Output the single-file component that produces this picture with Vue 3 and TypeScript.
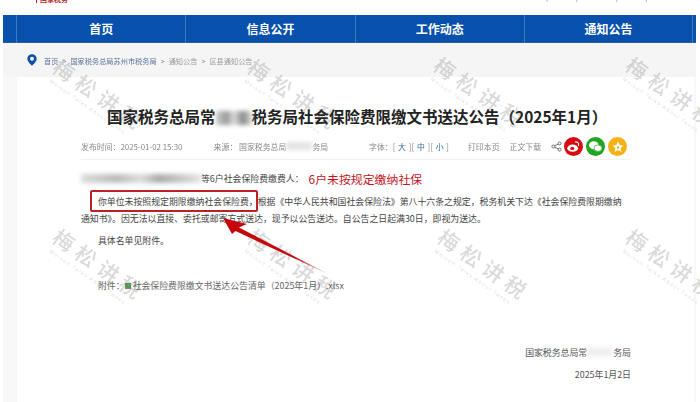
<template>
  <div class="page">
    <header class="topbar">
      <span class="logo">国家税务</span>
      <span class="top-links">无障碍浏览 | 繁体 | 关怀版 | 登录 | 注册</span>
    </header>

    <nav class="nav">
      <a v-for="item in navItems" :key="item" class="nav-item">{{ item }}</a>
    </nav>

    <div class="content">
      <div class="crumbs">
        <svg class="pin" viewBox="0 0 12 14" width="10" height="12">
          <path fill="#0a50a8" fill-rule="evenodd" d="M6 0a5.6 5.6 0 0 1 5.6 5.6C11.600 9.400 6 14 6 14S.4 9.400.4 5.600A5.600 5.600 0 0 1 6 0zm0 3.200a2.400 2.400 0 1 0 0 4.800 2.400 2.400 0 0 0 0-4.800z" />
        </svg>
        <span class="crumb-blue">首页</span>
        <span class="crumb-sep">&gt;</span>
        <span class="crumb-blue">国家税务总局苏州市税务局</span>
        <span class="crumb-sep">&gt;</span>
        <span>通知公告</span>
        <span class="crumb-sep">&gt;</span>
        <span>区县通知公告</span>
      </div>

      <main class="article">
        <h1 class="title">国家税务总局常<span class="blur-block"></span>税务局社会保险费限缴文书送达公告（2025年1月）</h1>

        <div class="meta">
          <span class="meta-time">发布时间：2025-01-02 15:30</span>
          <span class="meta-source">来源：&nbsp;国家税务总局<span class="blur-small"></span>务局</span>
          <span class="meta-font">字体：[ <b>大</b> ][ <b>中</b> ][ <b>小</b> ]</span>
          <span class="meta-action">打印本页</span>
          <span class="meta-action">正文下载</span>
          <svg class="share" viewBox="0 0 14 14" width="11" height="11">
            <g fill="none" stroke="#666" stroke-width="1.2">
              <circle cx="11" cy="3" r="1.900" />
              <circle cx="3" cy="7" r="1.900" />
              <circle cx="11" cy="11" r="1.900" />
              <path d="M4.700 6.100 9.300 3.900M4.700 7.900l4.600 2.200" />
            </g>
          </svg>
          <span class="social weibo">
            <svg viewBox="0 0 18 18" width="15" height="15">
              <ellipse cx="8" cy="11" rx="6.500" ry="4.300" fill="#fff" />
              <ellipse cx="7.500" cy="11.300" rx="2.400" ry="2" fill="#d90a0f" />
              <path d="M11 3.500c2.700-.5 4.800 1.700 4 4.300" fill="none" stroke="#fff" stroke-width="1.300" stroke-linecap="round" />
            </svg>
          </span>
          <span class="social wechat">
            <svg viewBox="0 0 18 18" width="15" height="15">
              <ellipse cx="7" cy="7.500" rx="5.800" ry="4.800" fill="#fff" />
              <ellipse cx="12" cy="11" rx="4.800" ry="3.900" fill="#fff" stroke="#1fa51f" stroke-width=".8" />
            </svg>
          </span>
          <span class="social star">
            <svg viewBox="0 0 18 18" width="14" height="14">
              <path d="m9 2 2.100 4.500 4.900.6-3.600 3.400.9 4.900L9 13l-4.300 2.400.9-4.900L2 7.100l4.900-.6z" fill="#fff" />
              <circle cx="9" cy="9.500" r="1.600" fill="#f5b014" />
            </svg>
          </span>
        </div>

        <div class="body">
          <p class="addressee"><span class="blur-line"></span>等6户社会保险费缴费人：<em class="highlight">6户未按规定缴纳社保</em></p>
          <p class="para first"><span class="boxed">你单位未按照规定期限缴纳社会保险费，</span>根据《中华人民共和国社会保险法》第八十六条之规定，税务机关下达《社会保险费限期缴纳</p>
          <p class="para">通知书》。因无法以直接、委托或邮寄方式送达，现予以公告送达。自公告之日起满30日，即视为送达。</p>
          <p class="para list">具体名单见附件。</p>
          <p class="para attach">附件：<i class="xls"></i>社会保险费限缴文书送达公告清单（2025年1月）.xlsx</p>
        </div>

        <div class="sign">
          <p>国家税务总局常<span class="blur-sign"></span>务局</p>
          <p>2025年1月2日</p>
        </div>
      </main>
    </div>

    <div
      v-for="(mark, idx) in watermarks"
      :key="idx"
      class="watermark"
      :style="{ left: mark.x - 70 + 'px', top: mark.y - 12 + 'px' }"
    >
      <span class="wm-main">梅松讲税</span>
      <span class="wm-sub">Meison Talks About Taxes</span>
    </div>

    <svg class="arrow" viewBox="0 0 700 402" width="700" height="402">
      <defs>
        <linearGradient id="arrowFade" gradientUnits="userSpaceOnUse" x1="223" y1="218" x2="332" y2="276">
          <stop offset="0" stop-color="#c5070d" />
          <stop offset="0.65" stop-color="#c5070d" />
          <stop offset="1" stop-color="#c5070d" stop-opacity="0" />
        </linearGradient>
      </defs>
      <path d="M223 218 247 224 239 227.500 332 276 235.500 231 232 234z" fill="url(#arrowFade)" />
    </svg>
  </div>
</template>

<script setup lang="ts">
const navItems = ['首页', '信息公开', '工作动态', '通知公告']

// centre of each watermark's big text, read off the screenshot
const watermarks = [
  { x: 95, y: 92 },
  { x: 290, y: 92 },
  { x: 476, y: 90 },
  { x: 668, y: 90 },
  { x: 95, y: 262 },
  { x: 290, y: 262 },
  { x: 480, y: 262 },
  { x: 668, y: 262 },
]
</script>

<style>
html,
body {
  margin: 0;
  background: #fff;
  overflow: hidden;
}
</style>

<style scoped>
.page {
  position: relative;
  width: 700px;
  height: 402px;
  overflow: hidden;
  background: #fff;
  font-family: "Noto Sans CJK SC", "Liberation Sans", sans-serif;
  color: #4a4a4a;
}

.topbar {
  display: flex;
  justify-content: space-between;
  height: 15px;
  padding: 0 28px 0 36px;
  overflow: hidden;
}

.logo {
  height: 7px;
  margin-top: -4px;
  padding-left: 3px;
  border-left: 1px solid #b5262a;
  color: #b5262a;
  font-size: 7px;
  font-weight: 700;
  line-height: 7px;
}

.top-links {
  height: 10px;
  margin-top: -10px;
  color: #999;
  font-size: 10px;
  letter-spacing: 0.5px;
  line-height: 10px;
}

.nav {
  display: grid;
  grid-template-columns: repeat(4, 169.3px);
  height: 28px;
  margin: 0 4px 0 3px;
  padding: 0 3px 0 13px;
  background: #0750ab;
  border-bottom: 1px solid #2a5f9f;
  box-sizing: border-box;
}

.nav-item {
  border-left: 1px solid #3f78bd;
  color: #fff;
  font-size: 12px;
  font-weight: 700;
  line-height: 28px;
  text-align: center;
}

.nav-item:last-child {
  border-right: 1px solid #3f78bd;
}

.content {
  height: 359px;
  margin: 0 4px 0 3px;
  background: #f8f8f8;
}

.crumbs {
  display: flex;
  align-items: center;
  gap: 4px;
  height: 34px;
  padding: 1px 0 0 24px;
  box-sizing: border-box;
  background: #f5f5f5;
  color: #9a9a9a;
  font-size: 7.2px;
  filter: blur(0.3px);
}

.pin {
  margin: -2px 3px 0 0;
}

.crumb-blue {
  color: #59739b;
}

.crumb-sep {
  color: #6e86aa;
}

.article {
  height: 325px;
  margin: 0 2px 0 14px;
  padding-top: 26px;
  box-sizing: border-box;
  background: #fff;
}

.title {
  margin: 0;
  padding-left: 90px;
  color: #222;
  font-size: 15.5px;
  font-weight: 700;
  line-height: 26px;
  white-space: nowrap;
}

.blur-block {
  display: inline-block;
  width: 36px;
  height: 14px;
  vertical-align: -2px;
  background: linear-gradient(90deg, #ccc, #999 30%, #ddd 50%, #888 75%, #ddd);
  filter: blur(2px);
}

.meta {
  display: flex;
  align-items: center;
  height: 25px;
  margin: 5px 64px 0 64px;
  border-bottom: 1px solid #f1f1f1;
  color: #8a8a8a;
  font-size: 7.9px;
  white-space: nowrap;
  filter: blur(0.3px);
}

.meta-time {
  width: 134px;
}

.meta-source {
  width: 157px;
}

.blur-small {
  display: inline-block;
  width: 26px;
  height: 8px;
  background: #e4e4e4;
  filter: blur(2px);
}

.meta-font {
  width: 100px;
}

.meta-font b {
  margin: 0 1px;
  color: #2c6a9c;
  font-weight: 400;
}

.meta-action {
  margin-right: 10px;
}

.share {
  margin-right: 2px;
}

.social {
  display: flex;
  flex: none;
  align-items: center;
  justify-content: center;
  width: 19px;
  height: 19px;
  margin-right: 3px;
  border-radius: 50%;
}

.weibo {
  background: #d90a0f;
}

.wechat {
  background: #1fa51f;
}

.star {
  background: #f5b014;
}

.body {
  padding: 8px 0 0 64px;
  color: #444;
  font-size: 8.9px;
}

.body p {
  margin: 0;
  white-space: nowrap;
}

.addressee {
  display: flex;
  align-items: center;
  height: 20px;
}

.blur-line {
  display: inline-block;
  width: 120px;
  height: 9px;
  background: linear-gradient(90deg, #ddd, #bbb 30%, #ddd 50%, #aaa 65%, #e4e4e4);
  filter: blur(2px);
}

.highlight {
  margin-left: 5px;
  color: #c4161c;
  font-size: 11.9px;
  font-style: normal;
}

.para {
  height: 17px;
  line-height: 17px;
}

.body .first {
  margin-top: 4.5px;
  padding-left: 17px;
}

.boxed {
  position: relative;
}

.boxed::after {
  content: "";
  position: absolute;
  left: -8px;
  right: 0;
  top: -4.5px;
  bottom: -4.5px;
  border: 2px solid #bd2025;
  border-radius: 2px;
}

.body .list {
  margin-top: 5px;
  padding-left: 17px;
}

.body .attach {
  margin-top: 28px;
  padding-left: 17px;
  color: #666;
}

.xls {
  display: inline-block;
  width: 6px;
  height: 6px;
  margin-right: 2px;
  background: #5f9f55;
}

.sign {
  margin-top: 52px;
  padding-right: 63px;
  color: #555;
  font-size: 8.9px;
  text-align: right;
}

.sign p {
  margin: 0 0 9px;
  line-height: 13px;
}

.blur-sign {
  display: inline-block;
  width: 26px;
  height: 8px;
  background: #eee;
  filter: blur(2px);
}

.watermark {
  position: absolute;
  display: flex;
  flex-direction: column;
  align-items: center;
  width: 140px;
  transform: rotate(35deg);
  pointer-events: none;
  color: rgba(90, 90, 90, 0.24);
  white-space: nowrap;
}

.wm-main {
  padding-left: 6px;
  font-size: 21px;
  font-weight: 500;
  line-height: 24px;
  letter-spacing: 6px;
}

.wm-sub {
  margin-top: 1px;
  font-family: "Liberation Sans", sans-serif;
  font-size: 5.5px;
  line-height: 8px;
  letter-spacing: 1.2px;
}

.arrow {
  position: absolute;
  left: 0;
  top: 0;
  pointer-events: none;
}
</style>
